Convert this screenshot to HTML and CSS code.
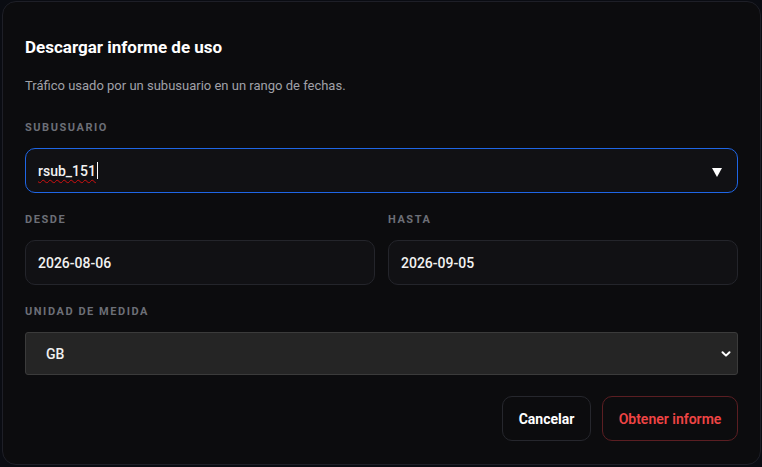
FILE: index.html
```html
<!DOCTYPE html>
<html lang="es">
<head>
<meta charset="utf-8">
<link rel="stylesheet" href="styles.css">
</head>
<body>
<div class="stage">
  <div class="modal">
    <h2 class="title">Descargar informe de uso</h2>
    <p class="subtitle">Tráfico usado por un subusuario en un rango de fechas.</p>

    <div class="label lbl-first">SUBUSUARIO</div>
    <div class="field field-focus">
      <span class="value"><span class="spell">rsub_151</span><span class="caret"></span></span>
      <svg class="tri" width="10" height="9" viewBox="0 0 10 9"><path d="M0 0 H10 L5 9 Z" fill="#ffffff"/></svg>
    </div>

    <div class="row">
      <div class="col">
        <div class="label">DESDE</div>
        <div class="field"><span class="value">2026-08-06</span></div>
      </div>
      <div class="col">
        <div class="label">HASTA</div>
        <div class="field"><span class="value">2026-09-05</span></div>
      </div>
    </div>

    <div class="label">UNIDAD DE MEDIDA</div>
    <div class="select">
      <span class="sel-value">GB</span>
      <svg class="chev" width="10" height="8" viewBox="0 0 10 8"><path d="M1.5 2.2 L5 5.6 L8.5 2.2" fill="none" stroke="#ffffff" stroke-width="2" stroke-linecap="round" stroke-linejoin="round"/></svg>
    </div>

    <div class="actions">
      <button class="btn btn-cancel">Cancelar</button>
      <button class="btn btn-primary">Obtener informe</button>
    </div>
  </div>
</div>
</body>
</html>
```
FILE: styles.css
```css
html, body {
  margin: 0;
  padding: 0;
  background: #0a0c12;
  font-family: Roboto, "Liberation Sans", Arial, sans-serif;
}
.stage {
  padding: 1px 1px 2px 2px;
}
.modal {
  box-sizing: border-box;
  width: 759px;
  height: 464px;
  background: #0c0c0e;
  border: 1px solid #1e1f27;
  border-radius: 14px;
  padding: 33px 22px 0 22px;
  display: flex;
  flex-direction: column;
}
.title {
  margin: 0;
  font-size: 17px;
  line-height: 24px;
  font-weight: 700;
  color: #ffffff;
}
.subtitle {
  margin: 17px 0 0 0;
  font-size: 13px;
  line-height: 20px;
  color: #a0a1a8;
}
.label {
  font-size: 11px;
  line-height: 14px;
  font-weight: 700;
  letter-spacing: 1.55px;
  color: #6c6f77;
  margin-top: 20px;
  margin-bottom: 13px;
}
.lbl-first {
  margin-top: 25px;
}
.field {
  box-sizing: border-box;
  height: 45px;
  border: 1px solid #24252b;
  border-radius: 10px;
  background: #111114;
  display: flex;
  align-items: center;
  padding: 0 12px;
}
.field-focus {
  border-color: #1f66e5;
  justify-content: space-between;
  padding-right: 15px;
}
.value {
  font-size: 14px;
  font-weight: 500;
  color: #f2f2f2;
  display: flex;
  align-items: center;
}
.spell {
  text-decoration: underline wavy #d01010;
  text-decoration-thickness: 1px;
  text-underline-offset: 3px;
}
.caret {
  display: inline-block;
  width: 1px;
  height: 17px;
  background: #ffffff;
  margin-left: 1px;
}
.tri {
  margin-top: 4px;
}
.row {
  display: flex;
  gap: 13px;
}
.col {
  flex: 1;
}
.select {
  box-sizing: border-box;
  height: 43px;
  background: #252525;
  border: 1px solid #3b3b3b;
  border-radius: 3px;
  display: flex;
  align-items: center;
  justify-content: space-between;
  padding: 0 6px 0 20px;
}
.sel-value {
  font-size: 14px;
  font-weight: 500;
  color: #f0f0f0;
}
.actions {
  display: flex;
  justify-content: flex-end;
  gap: 11px;
  margin-top: 21px;
}
.btn {
  box-sizing: border-box;
  height: 45px;
  border-radius: 10px;
  background: transparent;
  font-family: Roboto, "Liberation Sans", Arial, sans-serif;
  font-size: 14px;
  font-weight: 700;
  padding: 0;
}
.btn-cancel {
  width: 89px;
  border: 1px solid #26272d;
  color: #ffffff;
}
.btn-primary {
  width: 136px;
  border: 1px solid #5b1e22;
  color: #ef4444;
  font-weight: 600;
}
```
